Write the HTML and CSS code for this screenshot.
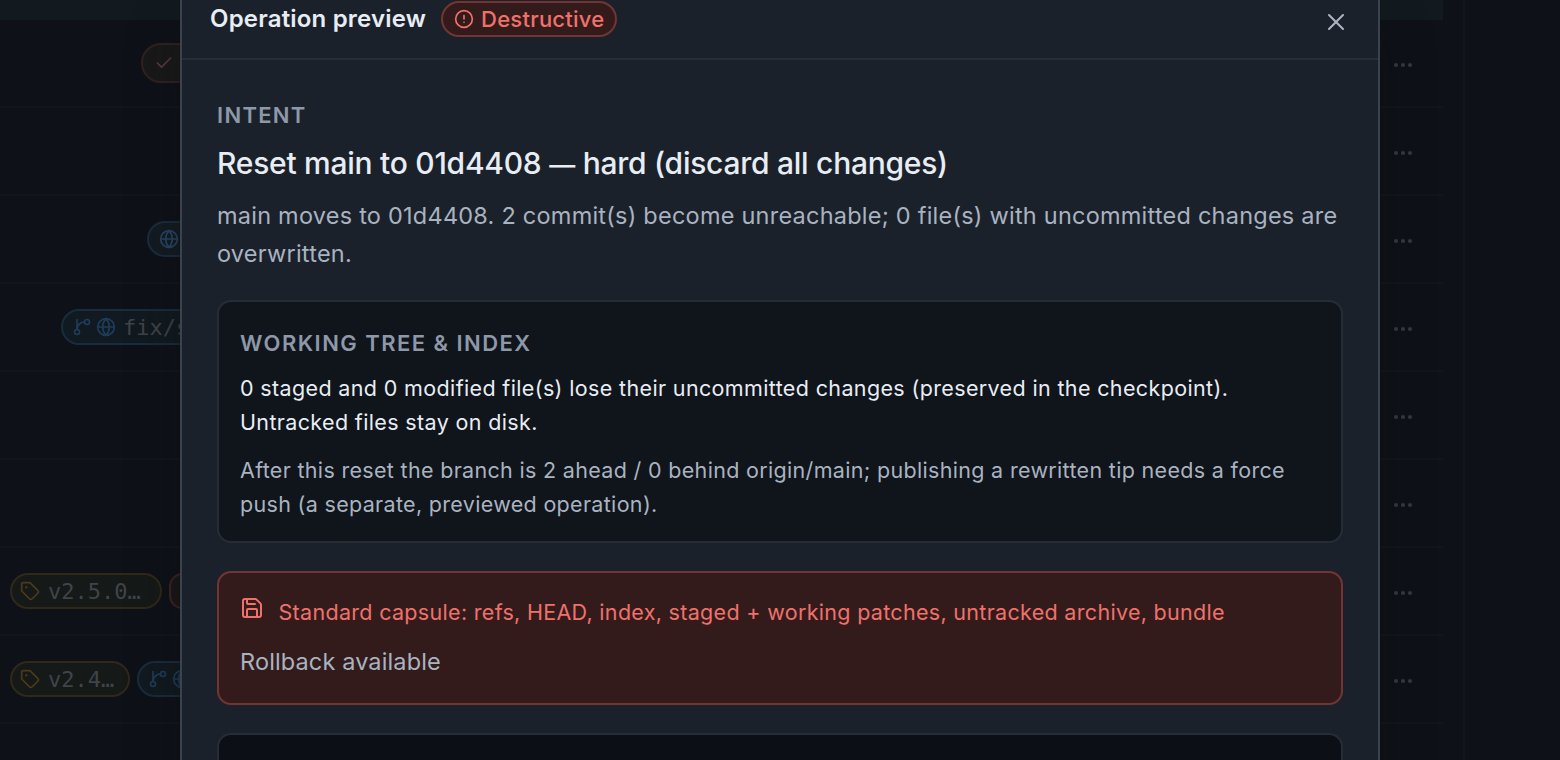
FILE: index.html
```html
<!DOCTYPE html>
<html lang="en">
<head>
  <meta charset="UTF-8">
  <meta name="viewport" content="width=device-width, initial-scale=1.0">
  <title>Operation preview</title>
  <link rel="stylesheet" href="styles.css">
</head>
<body>
  <!-- shared icons -->
  <svg class="sprite" xmlns="http://www.w3.org/2000/svg">
    <symbol id="i-globe" viewBox="0 0 24 24">
      <circle cx="12" cy="12" r="10"></circle>
      <path d="M12 2a14.5 14.5 0 0 0 0 20 14.5 14.5 0 0 0 0-20"></path>
      <path d="M2 12h20"></path>
    </symbol>
    <symbol id="i-branch" viewBox="0 0 24 24">
      <line x1="6" y1="3" x2="6" y2="15"></line>
      <circle cx="18" cy="6" r="3"></circle>
      <circle cx="6" cy="18" r="3"></circle>
      <path d="M15 6a9 9 0 0 0-9 9"></path>
    </symbol>
    <symbol id="i-tag" viewBox="0 0 24 24">
      <path d="M12.586 2.586A2 2 0 0 0 11.172 2H4a2 2 0 0 0-2 2v7.172a2 2 0 0 0 .586 1.414l8.704 8.704a2.426 2.426 0 0 0 3.42 0l6.58-6.58a2.426 2.426 0 0 0 0-3.42z"></path>
      <circle cx="7.5" cy="7.5" r=".5" fill="currentColor"></circle>
    </symbol>
    <symbol id="i-dots" viewBox="0 0 24 24">
      <circle cx="5" cy="12" r="1"></circle>
      <circle cx="12" cy="12" r="1"></circle>
      <circle cx="19" cy="12" r="1"></circle>
    </symbol>
  </svg>

  <div class="app">
    <div class="log">
      <div class="row row-selected"></div>
      <div class="row">
        <div class="refs">
          <span class="chip chip-head"><svg class="icon" viewBox="0 0 24 24"><path d="M20 6 9 17l-5-5"></path></svg></span>
        </div>
        <svg class="icon more"><use href="#i-dots"></use></svg>
      </div>
      <div class="row">
        <div class="refs"></div>
        <svg class="icon more"><use href="#i-dots"></use></svg>
      </div>
      <div class="row">
        <div class="refs">
          <span class="chip chip-remote"><svg class="icon"><use href="#i-globe"></use></svg></span>
        </div>
        <svg class="icon more"><use href="#i-dots"></use></svg>
      </div>
      <div class="row">
        <div class="refs">
          <span class="chip chip-branch chip-wide"><svg class="icon"><use href="#i-branch"></use></svg><svg class="icon"><use href="#i-globe"></use></svg><span>fix/s</span></span>
        </div>
        <svg class="icon more"><use href="#i-dots"></use></svg>
      </div>
      <div class="row">
        <div class="refs"></div>
        <svg class="icon more"><use href="#i-dots"></use></svg>
      </div>
      <div class="row">
        <div class="refs"></div>
        <svg class="icon more"><use href="#i-dots"></use></svg>
      </div>
      <div class="row">
        <div class="refs">
          <span class="chip chip-tag chip-tag-long"><svg class="icon"><use href="#i-tag"></use></svg><span>v2.5.0…</span></span>
          <span class="chip chip-stash"></span>
        </div>
        <svg class="icon more"><use href="#i-dots"></use></svg>
      </div>
      <div class="row">
        <div class="refs">
          <span class="chip chip-tag chip-tag-short"><svg class="icon"><use href="#i-tag"></use></svg><span>v2.4…</span></span>
          <span class="chip chip-branch"><svg class="icon"><use href="#i-branch"></use></svg><svg class="icon"><use href="#i-globe"></use></svg></span>
        </div>
        <svg class="icon more"><use href="#i-dots"></use></svg>
      </div>
    </div>
    <div class="side"></div>
  </div>

  <div class="modal" role="dialog" aria-labelledby="title">
    <header class="modal-header">
      <h2 class="modal-title" id="title">Operation preview</h2>
      <span class="badge">
        <svg class="icon" viewBox="0 0 24 24"><circle cx="12" cy="12" r="10"></circle><line x1="12" y1="8" x2="12" y2="12"></line><line x1="12" y1="16" x2="12.01" y2="16"></line></svg>
        <span>Destructive</span>
      </span>
      <button class="close" aria-label="Close">
        <svg class="icon" viewBox="0 0 24 24"><path d="M18 6 6 18"></path><path d="m6 6 12 12"></path></svg>
      </button>
    </header>
    <div class="modal-body">
      <section class="intent">
        <h3 class="label">Intent</h3>
        <p class="headline">Reset main to 01d4408 <span class="dash">—</span> hard (discard all changes)</p>
        <p class="summary">main moves to 01d4408. 2 commit(s) become unreachable; 0 file(s) with uncommitted changes are<br>overwritten.</p>
      </section>
      <section class="panel">
        <h3 class="label">Working tree &amp; index</h3>
        <p class="effect">0 staged and 0 modified file(s) lose their uncommitted changes (preserved in the checkpoint).<br>Untracked files stay on disk.</p>
        <p class="effect effect-muted">After this reset the branch is 2 ahead / 0 behind origin/main; publishing a rewritten tip needs a force<br>push (a separate, previewed operation).</p>
      </section>
      <section class="panel panel-danger">
        <p class="capsule">
          <svg class="icon" viewBox="0 0 24 24"><path d="M15.2 3a2 2 0 0 1 1.4.6l3.8 3.8a2 2 0 0 1 .6 1.4V19a2 2 0 0 1-2 2H5a2 2 0 0 1-2-2V5a2 2 0 0 1 2-2z"></path><path d="M17 21v-7a1 1 0 0 0-1-1H8a1 1 0 0 0-1 1v7"></path><path d="M7 3v4a1 1 0 0 0 1 1h7"></path></svg>
          <span>Standard capsule: refs, HEAD, index, staged + working patches, untracked archive, bundle</span>
        </p>
        <p class="rollback">Rollback available</p>
      </section>
      <section class="panel panel-next"></section>
    </div>
  </div>
</body>
</html>
```
FILE: styles.css
```css
:root {
  --background: #0e1118;
  --surface: #1b212a;
  --inset: #10141b;
  --border: #262d36;
  --border-strong: #3a424e;
  --text: #e8edf4;
  --text-soft: #a9b3c0;
  --text-muted: #8d98a8;
  --danger: #f0716a;
  --danger-bg: #331b1c;
  --danger-border: #733533;
  --radius: 14px;
}

* {
  margin: 0;
  padding: 0;
  box-sizing: border-box;
}

body {
  height: 760px;
  overflow: hidden;
  position: relative;
  background: var(--background);
  color: var(--text);
  font-family: Inter, "Liberation Sans", sans-serif;
}

.sprite {
  position: absolute;
  width: 0;
  height: 0;
}

.icon {
  width: 20px;
  height: 20px;
  flex: none;
  fill: none;
  stroke: currentColor;
  stroke-width: 2;
  stroke-linecap: round;
  stroke-linejoin: round;
}

/* commit log behind the dialog */
.app {
  display: flex;
  height: 760px;
  overflow: hidden;
}

.log {
  width: 1443px;
}

.row {
  display: flex;
  align-items: center;
  justify-content: space-between;
  height: 88px;
  padding-right: 28px;
  border-bottom: 2px solid #12151b;
}

.row-selected {
  height: 20px;
  background: #121a20;
  border-bottom: none;
}

.side {
  flex: 1;
  margin-left: 20px;
  border-left: 2px solid #13171d;
}

.more {
  width: 24px;
  height: 24px;
  margin-top: 3px;
  color: #36393f;
  stroke-width: 2.2;
}

.refs {
  display: flex;
  justify-content: flex-end;
  gap: 7px;
  width: 196px;
}

.chip {
  display: flex;
  align-items: center;
  gap: 4px;
  height: 36px;
  padding-left: 9px;
  border: 2px solid;
  border-radius: 20px;
  overflow: hidden;
  font-family: "DejaVu Sans Mono", monospace;
  font-size: 22px;
  white-space: nowrap;
}

.chip span {
  margin-left: 3px;
  color: #404449;
}

.chip-head {
  width: 55px;
  height: 40px;
  padding-left: 11px;
  color: #553c39;
  background: #19191a;
  border-color: #302222;
}

.chip-remote {
  width: 49px;
  padding-left: 10px;
  color: #294564;
  background: #131b22;
  border-color: #1b2d3f;
}

.chip-branch {
  width: 59px;
  color: #1f3c5b;
  background: #111a20;
  border-color: #182c40;
}

.chip-wide {
  width: 135px;
}

.chip-tag {
  padding-left: 8px;
  color: #4c3b1a;
  background: #151918;
  border-color: #302919;
}

.chip-tag span {
  margin-left: 4px;
}

.chip-tag-long {
  width: 152px;
}

.chip-tag-short {
  width: 120px;
}

.chip-stash {
  width: 27px;
  background: #191617;
  border-color: #3c2427;
}

/* dialog, its bottom continues below the window */
.modal {
  position: absolute;
  top: -20px;
  left: 180px;
  width: 1200px;
  height: 780px;
  overflow: hidden;
  background: var(--surface);
  border: 2px solid var(--border-strong);
  border-bottom: none;
  box-shadow: 0 48px 48px rgba(14, 16, 16, 0.4);
}

.modal-header {
  display: flex;
  align-items: center;
  height: 78px;
  padding: 0 28px 2px;
  border-bottom: 2px solid var(--border);
}

.modal-title {
  margin-top: -2px;
  font-size: 24px;
  font-weight: 600;
  letter-spacing: 0.19px;
}

.badge {
  display: flex;
  align-items: center;
  gap: 7px;
  height: 36px;
  margin-left: 15px;
  padding: 0 11px;
  color: var(--danger);
  background: var(--danger-bg);
  border: 2px solid var(--danger-border);
  border-radius: 18px;
  font-size: 22px;
  font-weight: 500;
  letter-spacing: 0.23px;
}

.close {
  display: flex;
  margin: 6px 0 0 auto;
  color: var(--text-soft);
  background: none;
  border: none;
  cursor: pointer;
}

.close .icon {
  width: 28px;
  height: 28px;
  stroke-width: 1.8;
}

.modal-body {
  padding: 39px 35px 0;
}

.label {
  color: var(--text-muted);
  font-size: 22px;
  font-weight: 600;
  line-height: 32px;
  letter-spacing: 1.45px;
  text-transform: uppercase;
}

.intent .label {
  letter-spacing: 1.3px;
}

.headline {
  margin-top: 12px;
  font-size: 30px;
  font-weight: 500;
  line-height: 40px;
  letter-spacing: -0.26px;
  white-space: nowrap;
}

.dash {
  font-size: 26px;
  line-height: 1;
}

.summary {
  margin-top: 14px;
  color: var(--text-soft);
  font-size: 23.5px;
  line-height: 38px;
  letter-spacing: 0.23px;
  white-space: nowrap;
}

.panel {
  margin-top: 28px;
  height: 243px;
  padding: 25px 21px;
  background: var(--inset);
  border: 2px solid var(--border);
  border-radius: var(--radius);
}

.intent + .panel {
  margin-top: 27px;
}

.effect {
  margin-top: 12px;
  font-size: 21.5px;
  line-height: 34px;
  letter-spacing: 0.36px;
  white-space: nowrap;
}

.effect-muted {
  margin-top: 14px;
  color: var(--text-soft);
  letter-spacing: 0.32px;
}

.panel-danger {
  height: 134px;
  padding-top: 20px;
  background: var(--danger-bg);
  border-color: var(--danger-border);
}

.capsule {
  display: flex;
  gap: 14.5px;
  color: var(--danger);
  font-size: 21.5px;
  line-height: 38px;
  letter-spacing: 0.31px;
  white-space: nowrap;
}

.capsule .icon {
  width: 24px;
  height: 24px;
  margin-top: 3px;
}

.rollback {
  margin-top: 13px;
  color: var(--text-soft);
  font-size: 23.5px;
  line-height: 36px;
  letter-spacing: 0.13px;
}

.panel-next {
  height: 27px;
  padding: 0;
  background: #0d0f17;
  border-bottom: none;
  border-radius: var(--radius) var(--radius) 0 0;
}
```
